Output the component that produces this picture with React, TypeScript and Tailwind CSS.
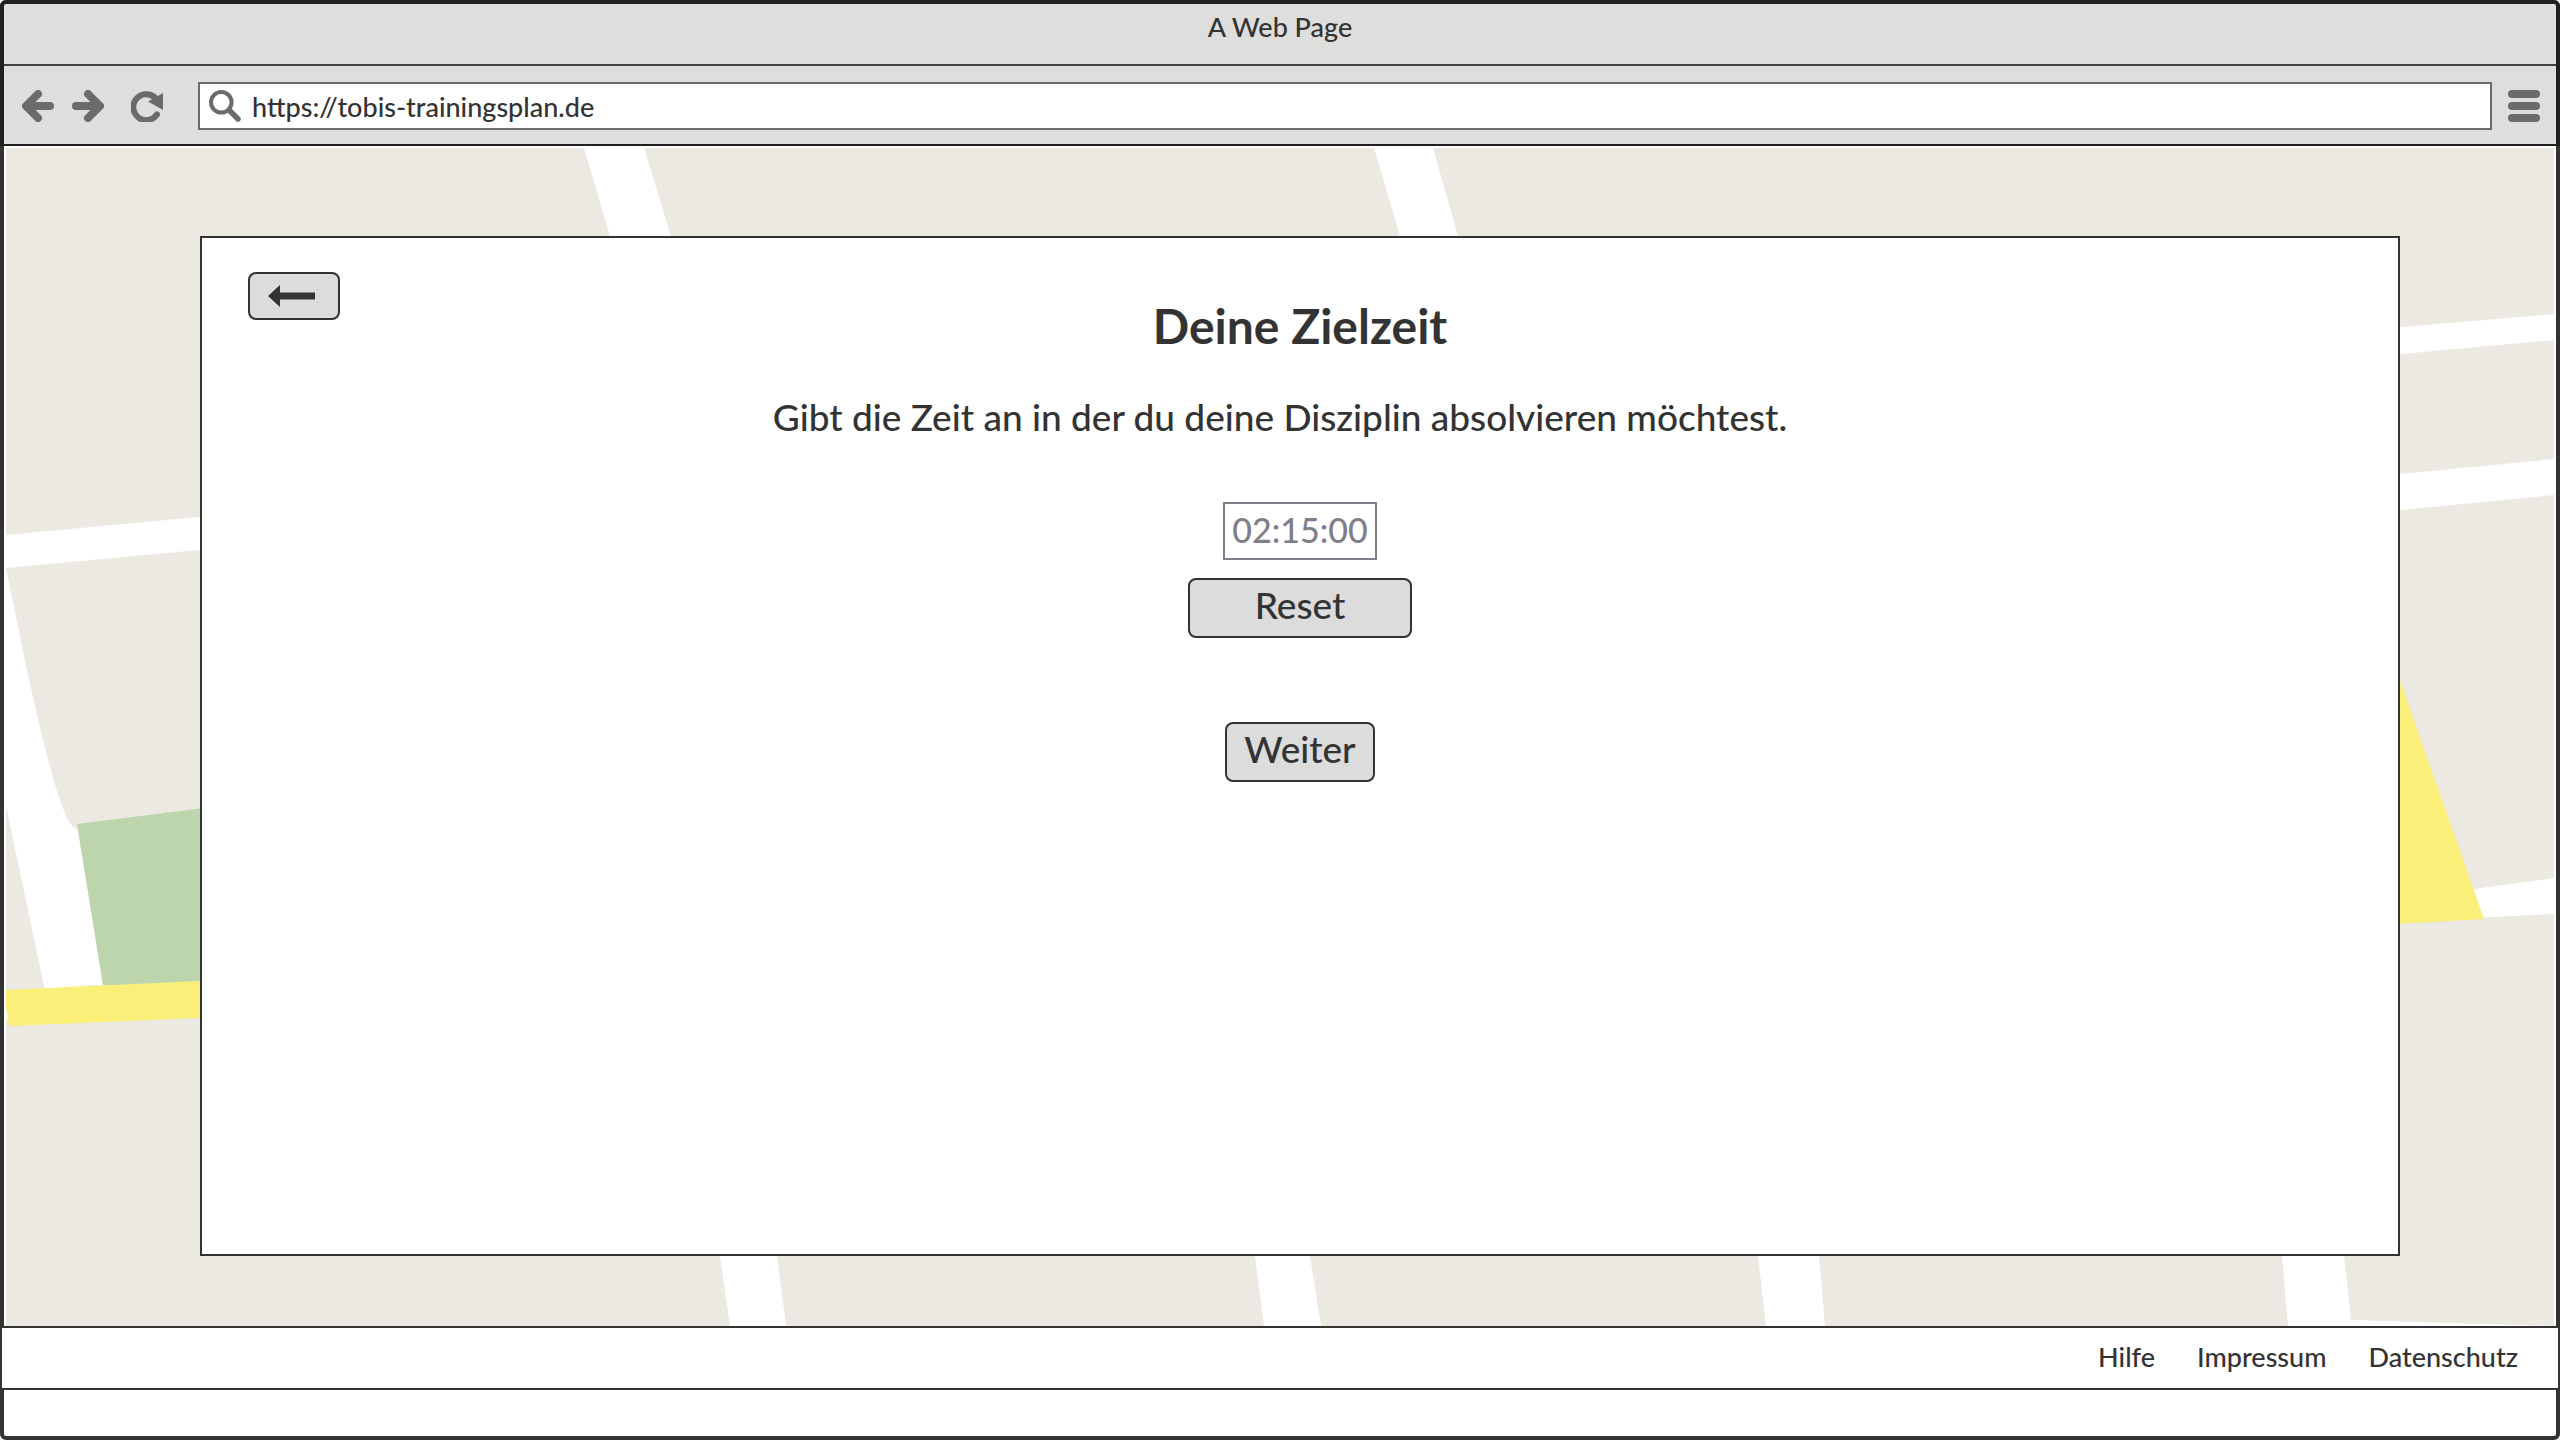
import { useState } from "react";

const iconButton = "flex h-8 w-8 items-center justify-center text-[#6b6b6b]";

function ArrowIcon({ flipped = false }: { flipped?: boolean }) {
  return (
    <svg viewBox="0 0 32 32" className={flipped ? "h-8 w-8 rotate-180" : "h-8 w-8"} fill="none" stroke="currentColor" strokeWidth="8" strokeLinecap="round" strokeLinejoin="round" aria-hidden="true">
      <path d="M16 4 4 16l12 12" />
      <path d="M6 16h22" />
    </svg>
  );
}

function ReloadIcon() {
  return (
    <svg viewBox="0 0 32 32" className="h-8 w-8" aria-hidden="true">
      <path d="M24 7.5A13 13 0 1 0 26 24.500" fill="none" stroke="currentColor" strokeWidth="6" strokeLinecap="round" />
      <path d="M32 3v17L17 11.500Z" fill="currentColor" />
    </svg>
  );
}

function SearchIcon() {
  return (
    <svg viewBox="0 0 32 32" className="h-8 w-8 shrink-0 text-[#6b6b6b]" fill="none" stroke="currentColor" aria-hidden="true">
      <circle cx="12.300" cy="12.300" r="10.300" strokeWidth="4" />
      <path d="m20 20 9 9" strokeWidth="5.500" strokeLinecap="round" />
    </svg>
  );
}

function MenuIcon() {
  return (
    <svg viewBox="0 0 32 32" className="h-8 w-8" fill="currentColor" aria-hidden="true">
      <rect width="32" height="8" rx="4" />
      <rect y="12" width="32" height="8" rx="4" />
      <rect y="24" width="32" height="8" rx="4" />
    </svg>
  );
}

function CityMap() {
  return (
    <svg viewBox="6 148 2548 1178" preserveAspectRatio="none" className="h-full w-full" aria-hidden="true">
      <rect x="6" y="148" width="2548" height="1178" fill="#ece9e2" />
      <g fill="#ffffff">
        <path d="M584 148h60l27 88 20 60h-62l-19-60Z" />
        <path d="M1374 148h59l25 88 18 60h-59l-17-60Z" />
        <path d="M6 535 220 515v33L6 568Z" />
        <path d="M6 568C26 665 58 829 77 829v-5l26 161-59 1L6 806Z" />
        <path d="M44 986h62v10H44ZM6 1000h10v19H6Z" />
        <path d="M2380 329 2554 314v26l-174 16Z" />
        <path d="M2380 476 2554 459v36l-174 17Z" />
        <path d="M2474 889 2554 878v36l-80 4Z" />
        <path d="M713 1206h60l4 50 9 70h-56l-10-70Z" />
        <path d="M1248 1206h57l5 50 11 70h-57l-9-70Z" />
        <path d="M1753 1206h62l4 50 6 70h-59l-8-70Z" />
        <path d="M2278 1206h62l4 50 7 64 203 6h-266l-6-70Z" />
      </g>
      <path d="M77 824 220 806v180l-117-1Z" fill="#bcd5ad" />
      <path d="M6 990 220 980v37L9 1026 6 1006Z" fill="#faef78" />
      <path d="M2380 624 2484 919l-104 6Z" fill="#faef78" />
    </svg>
  );
}

export default function App() {
  const [time, setTime] = useState("02:15:00");

  return (
    <div className="flex min-h-screen flex-col rounded-md border-4 border-[#333333] bg-white font-['Lato',sans-serif] text-[27px] leading-8 font-medium text-[#333333]">
      <header className="-mx-1 -mt-1 rounded-t-md border-4 border-b-2 border-[#231f20] bg-[#dededd]">
        <div className="flex h-[62px] items-start justify-center border-b-2 border-[#444444] pt-[7px]">
          <h2>A Web Page</h2>
        </div>
        <div className="flex h-[78px] items-center pt-0.5 pr-4 pl-[18px]">
          <nav className="flex shrink-0 items-center" aria-label="Browser">
            <button type="button" aria-label="Zurück" className={iconButton}>
              <ArrowIcon />
            </button>
            <button type="button" aria-label="Vorwärts" className={`${iconButton} ml-[18px]`}>
              <ArrowIcon flipped />
            </button>
            <button type="button" aria-label="Neu laden" className={`${iconButton} ml-[27px]`}>
              <ReloadIcon />
            </button>
          </nav>
          <label className="ml-[35px] flex h-12 flex-1 items-center gap-[11px] border-2 border-[#6b6b6b] bg-white pl-[9px]">
            <SearchIcon />
            <input type="text" aria-label="Adresse" defaultValue="https://tobis-trainingsplan.de" className="min-w-0 flex-1 bg-transparent pt-0.5 outline-none" />
          </label>
          <button type="button" aria-label="Menü" className={`${iconButton} ml-4`}>
            <MenuIcon />
          </button>
        </div>
      </header>

      <main className="relative flex flex-1 flex-col pt-[90px] pr-[156px] pb-[70px] pl-[196px]">
        <div className="absolute inset-x-0.5 top-0.5 bottom-0">
          <CityMap />
        </div>
        <section className="relative flex flex-1 flex-col items-center border-2 border-[#333333] bg-white pt-[58px]">
          <button type="button" aria-label="Zurück" className="absolute top-[34px] left-[46px] flex h-12 w-[92px] items-center justify-center rounded-lg border-2 border-[#333333] bg-[#dcdcdc] pr-1">
            <svg viewBox="0 0 48 22" className="h-[22px] w-12" fill="#333333" aria-hidden="true">
              <path d="M0 11 12 0v7.500h35v7H12V22Z" />
            </svg>
          </button>
          <h1 className="text-5xl leading-[60px] font-bold">Deine Zielzeit</h1>
          <p className="mt-[31px] pr-10 text-[37px] leading-[60px]">Gibt die Zeit an in der du deine Disziplin absolvieren möchtest.</p>
          <input type="text" aria-label="Zielzeit" value={time} onChange={(e) => setTime(e.target.value)} className="mt-[55px] h-[58px] w-[154px] border-2 border-[#7f7e8b] bg-white pb-1 text-center text-[34px] text-[#7f7e8b] outline-none" />
          <button type="button" onClick={() => setTime("02:15:00")} className="mt-[18px] h-[60px] w-56 rounded-lg border-2 border-[#333333] bg-[#dcdcdc] pb-1.5 text-[37px]">
            Reset
          </button>
          <button type="button" className="mt-[84px] h-[60px] w-[150px] rounded-lg border-2 border-[#333333] bg-[#dcdcdc] pb-1.5 text-[37px]">
            Weiter
          </button>
        </section>
      </main>

      <footer className="relative -mx-1 mb-[46px] flex h-16 items-center justify-end gap-[42px] border-2 border-[#333333] bg-white pr-10 pb-0.5">
        <a href="#hilfe">Hilfe</a>
        <a href="#impressum">Impressum</a>
        <a href="#datenschutz">Datenschutz</a>
      </footer>
    </div>
  );
}
